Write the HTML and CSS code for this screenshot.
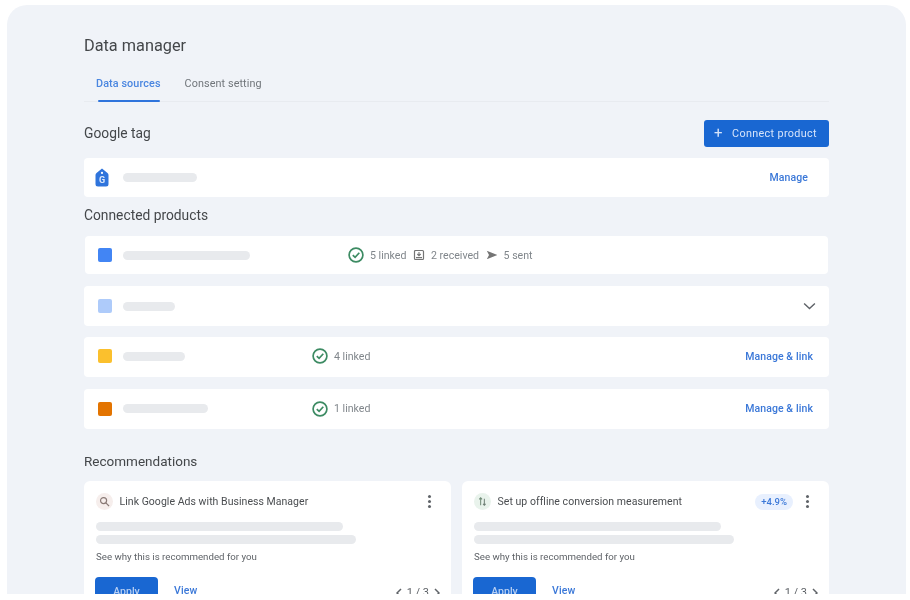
FILE: index.html
```html
<!DOCTYPE html>
<html lang="en">
<head>
<meta charset="utf-8">
<title>Data manager</title>
<link rel="stylesheet" href="styles.css">
</head>
<body>
<main class="panel">
  <h1 class="title">Data manager</h1>
  <nav class="tabs">
    <a class="tab tab-active">Data sources</a>
    <a class="tab">Consent setting</a>
  </nav>
  <div class="section-head">
    <h2 class="heading">Google tag</h2>
    <button class="connect"><span class="plus">+</span>Connect product</button>
  </div>
  <div class="row row-tag">
    <svg class="tag-icon" viewBox="0 0 14 18"><path d="M7 0 L12.5 4.5 Q13.5 5.3 13.5 6.5 V15.5 Q13.5 18 11 18 H3 Q.5 18 .5 15.5 V6.5 Q.5 5.3 1.5 4.5 Z" fill="#2f74dc"/><circle cx="7" cy="4.4" r="1.1" fill="#fff"/><text x="7" y="14.4" class="tag-letter">G</text></svg>
    <span class="bar bar-tag"></span>
    <a class="link link-manage">Manage</a>
  </div>
  <h2 class="heading heading-products">Connected products</h2>
  <div class="row row-first">
    <span class="swatch swatch-blue"></span>
    <div class="name name-wide"><span class="bar bar-1"></span></div>
    <svg class="check" viewBox="0 0 16 16"><circle cx="8" cy="8" r="6.9" fill="none" stroke="#3d8b63" stroke-width="1.7"/><path d="M4.8 8.2 7.1 10.4 11.3 5.8" fill="none" stroke="#3d8b63" stroke-width="1.7"/></svg>
    <span class="stat">5 linked</span>
    <svg class="mini" viewBox="0 0 12 12"><rect x="1.5" y="1.5" width="9" height="9" rx="1" fill="none" stroke="#757575" stroke-width="1.2"/><path d="M6 3v3.4M4.3 5 6 6.8 7.7 5M3 8.6h6" fill="none" stroke="#757575" stroke-width="1.1"/></svg>
    <span class="stat">2 received</span>
    <svg class="mini" viewBox="0 0 12 12"><path d="M.8 1.8 11.4 6 .8 10.2 3 6Z" fill="#757575"/></svg>
    <span class="stat">5 sent</span>
  </div>
  <div class="row row-second">
    <span class="swatch swatch-light"></span>
    <span class="bar bar-2"></span>
    <svg class="chevron" viewBox="0 0 14 8"><path d="M1.2 1.2 7 6.8 12.8 1.2" fill="none" stroke="#5f6368" stroke-width="1.5"/></svg>
  </div>
  <div class="row row-third">
    <span class="swatch swatch-yellow"></span>
    <div class="name name-narrow"><span class="bar bar-3"></span></div>
    <svg class="check" viewBox="0 0 16 16"><circle cx="8" cy="8" r="6.9" fill="none" stroke="#3d8b63" stroke-width="1.7"/><path d="M4.8 8.2 7.1 10.4 11.3 5.8" fill="none" stroke="#3d8b63" stroke-width="1.7"/></svg>
    <span class="stat">4 linked</span>
    <a class="link link-row">Manage &amp; link</a>
  </div>
  <div class="row row-fourth">
    <span class="swatch swatch-orange"></span>
    <div class="name name-narrow"><span class="bar bar-4"></span></div>
    <svg class="check" viewBox="0 0 16 16"><circle cx="8" cy="8" r="6.9" fill="none" stroke="#3d8b63" stroke-width="1.7"/><path d="M4.8 8.2 7.1 10.4 11.3 5.8" fill="none" stroke="#3d8b63" stroke-width="1.7"/></svg>
    <span class="stat">1 linked</span>
    <a class="link link-row">Manage &amp; link</a>
  </div>
  <h2 class="heading heading-rec">Recommendations</h2>
  <div class="cards">
    <article class="card">
      <header class="card-head">
        <span class="badge badge-red"><svg viewBox="0 0 12 12"><circle cx="5" cy="5" r="3.3" fill="none" stroke="#8a7a76" stroke-width="1.3"/><path d="M7.5 7.5 11 11" stroke="#8a7a76" stroke-width="1.4"/></svg></span>
        <h3 class="card-title">Link Google Ads with Business Manager</h3>
        <span class="kebab"><i></i><i></i><i></i></span>
      </header>
      <span class="bar line-a"></span>
      <span class="bar line-b"></span>
      <p class="why">See why this is recommended for you</p>
      <footer class="card-foot">
        <button class="apply">Apply</button>
        <a class="link link-view">View</a>
        <span class="pager"><svg class="arrow" viewBox="0 0 6 10"><path d="M5 1 1 5l4 4" fill="none" stroke="#5f6368" stroke-width="1.5"/></svg>1 / 3<svg class="arrow" viewBox="0 0 6 10"><path d="M1 1l4 4-4 4" fill="none" stroke="#5f6368" stroke-width="1.5"/></svg></span>
      </footer>
    </article>
    <article class="card">
      <header class="card-head">
        <span class="badge badge-green"><svg viewBox="0 0 12 12"><path d="M4 10V2M2.4 3.6 4 2l1.6 1.6" fill="none" stroke="#6f8a76" stroke-width="1.1"/><path d="M8 3v7M6.6 8.6 8 10l1.4-1.4" fill="none" stroke="#6f7f76" stroke-width="1.1"/></svg></span>
        <h3 class="card-title">Set up offline conversion measurement</h3>
        <span class="pill">+4.9%</span>
        <span class="kebab kebab-pill"><i></i><i></i><i></i></span>
      </header>
      <span class="bar line-a"></span>
      <span class="bar line-b"></span>
      <p class="why">See why this is recommended for you</p>
      <footer class="card-foot">
        <button class="apply">Apply</button>
        <a class="link link-view">View</a>
        <span class="pager"><svg class="arrow" viewBox="0 0 6 10"><path d="M5 1 1 5l4 4" fill="none" stroke="#5f6368" stroke-width="1.5"/></svg>1 / 3<svg class="arrow" viewBox="0 0 6 10"><path d="M1 1l4 4-4 4" fill="none" stroke="#5f6368" stroke-width="1.5"/></svg></span>
      </footer>
    </article>
  </div>
</main>
</body>
</html>
```
FILE: styles.css
```css
* { box-sizing: border-box; }
html, body { margin: 0; background: #fff; }
body { font-family: Roboto, "Liberation Sans", sans-serif; color: #3c4043; }
h1, h2, h3, p { margin: 0; font-weight: 400; }

.panel {
  margin: 5px 4px 0 7px;
  width: 899px;
  height: 589px;
  padding: 31px 77px 0;
  background: #f0f3f8;
  border-radius: 20px 20px 0 0;
  overflow: hidden;
  filter: blur(0.6px);
}
.title { font-size: 16.3px; line-height: 20px; color: #44474a; }

.tabs {
  display: flex;
  gap: 24px;
  height: 31px;
  margin-top: 15px;
  padding-left: 12px;
  border-bottom: 1px solid #e8ebf0;
}
.tab { font-size: 10.8px; line-height: 15px; padding-top: 5px; color: #70757a; letter-spacing: .1px; }
.tab-active { color: #4a86e0; font-weight: 500; position: relative; }
.tab-active::after {
  content: "";
  position: absolute;
  left: 2px;
  right: 1px;
  top: 29px;
  height: 2px;
  background: #2f74dc;
  border-radius: 1px;
}

.section-head { display: flex; justify-content: space-between; align-items: center; margin-top: 17px; height: 28px; }
.heading { font-size: 13.8px; line-height: 18px; color: #44474a; }
.connect {
  display: flex;
  align-items: center;
  width: 125px;
  height: 27px;
  padding: 0 0 0 10px;
  border: 0;
  border-radius: 3px;
  background: #1967d2;
  color: #d6e4fa;
  font: 400 10.8px Roboto, sans-serif;
  letter-spacing: .35px;
}
.plus { width: 18px; font-size: 15px; font-weight: 400; text-align: left; }

.row {
  display: flex;
  align-items: center;
  height: 40px;
  padding-left: 14px;
  background: #fff;
  border-radius: 4px;
}
.row-tag { height: 39px; margin-top: 11px; padding-left: 11px; }
.row-first { margin-top: 12px; height: 38px; margin-left: 1px; margin-right: 1px; padding-left: 13px; }
.row-second { margin-top: 12px; }
.row-third { margin-top: 11px; padding-bottom: 2px; }
.row-fourth { margin-top: 12px; padding-bottom: 1px; }
.heading-products { margin-top: 9px; }
.heading-rec { margin-top: 23px; font-size: 13.5px; }

.tag-icon { width: 14px; height: 19px; flex: none; margin-right: 14px; }
.tag-letter { font: 700 9px Roboto, sans-serif; fill: #dbe8fb; text-anchor: middle; }

.swatch { width: 14px; height: 14px; flex: none; margin-right: 11px; border-radius: 2px; }
.swatch-blue { background: #4285f4; }
.swatch-light { background: #aecbfa; }
.swatch-yellow { background: #fbc02d; }
.swatch-orange { background: #e37400; }

.bar { display: block; height: 9px; background: #e8eaed; border-radius: 5px; }
.bar-tag { width: 74px; }
.bar-1 { width: 127px; }
.bar-2 { width: 52px; }
.bar-3 { width: 62px; }
.bar-4 { width: 85px; }

.name { flex: none; }
.name-wide { width: 225px; }
.name-narrow { width: 189px; }

.check { width: 16px; height: 16px; flex: none; margin-right: 6px; }
.stat { font-size: 10.6px; color: #80868b; margin-right: 7px; }
.mini { width: 12px; height: 12px; flex: none; margin-right: 5.5px; }

.link { color: #3b78d8; font-size: 10.5px; font-weight: 500; letter-spacing: .1px; }
.link-manage { margin-left: auto; margin-right: 21px; }
.link-row { margin-left: auto; margin-right: 16px; }
.chevron { width: 13px; height: 8px; margin-left: auto; margin-right: 13px; }

.cards { display: grid; grid-template-columns: 367px 367px; gap: 11px; margin-top: 11px; }
.card { height: 140px; padding: 11px 12px 0; background: #fff; border-radius: 6px 6px 0 0; }
.card-head { display: flex; align-items: center; height: 19px; }
.badge {
  display: flex;
  align-items: center;
  justify-content: center;
  flex: none;
  width: 17px;
  height: 17px;
  margin-right: 6.5px;
  border-radius: 50%;
}
.badge svg { width: 11px; height: 11px; }
.badge-red { background: #f6eeec; }
.badge-green { background: #e9f3ec; }
.card-title { font-size: 10.5px; line-height: 14px; color: #4a4d50; letter-spacing: .04px; }
.kebab { display: flex; flex-direction: column; gap: 2px; margin-left: auto; margin-right: 8px; }
.kebab i { width: 3px; height: 3px; border-radius: 50%; background: #5f6368; }
.kebab-pill { margin-left: 13px; margin-right: 8px; }
.pill {
  margin-left: auto;
  padding: 0 6px;
  height: 16px;
  line-height: 16px;
  border-radius: 8px;
  background: #e8f0fe;
  color: #3b78d8;
  font-size: 9.5px;
  font-weight: 500;
}

.line-a { width: 247px; height: 9px; margin-top: 11px; }
.line-b { width: 260px; height: 9px; margin-top: 4px; }
.why { margin-top: 7px; font-size: 9.7px; line-height: 12px; color: #5f6368; }

.card-foot { display: flex; align-items: flex-start; margin-top: 14px; }
.apply {
  width: 63px;
  height: 28px;
  margin-left: -1px;
  padding: 0;
  border: 0;
  border-radius: 4px;
  background: #1967d2;
  color: #b7cff3;
  font: 500 10.5px Roboto, sans-serif;
}
.link-view { margin-left: 16px; padding-top: 7px; }
.pager { display: flex; align-items: center; gap: 5px; margin-left: auto; margin-right: -1px; padding-top: 9px; font-size: 11px; color: #5f6368; }
.arrow { width: 6px; height: 10px; flex: none; }
```
